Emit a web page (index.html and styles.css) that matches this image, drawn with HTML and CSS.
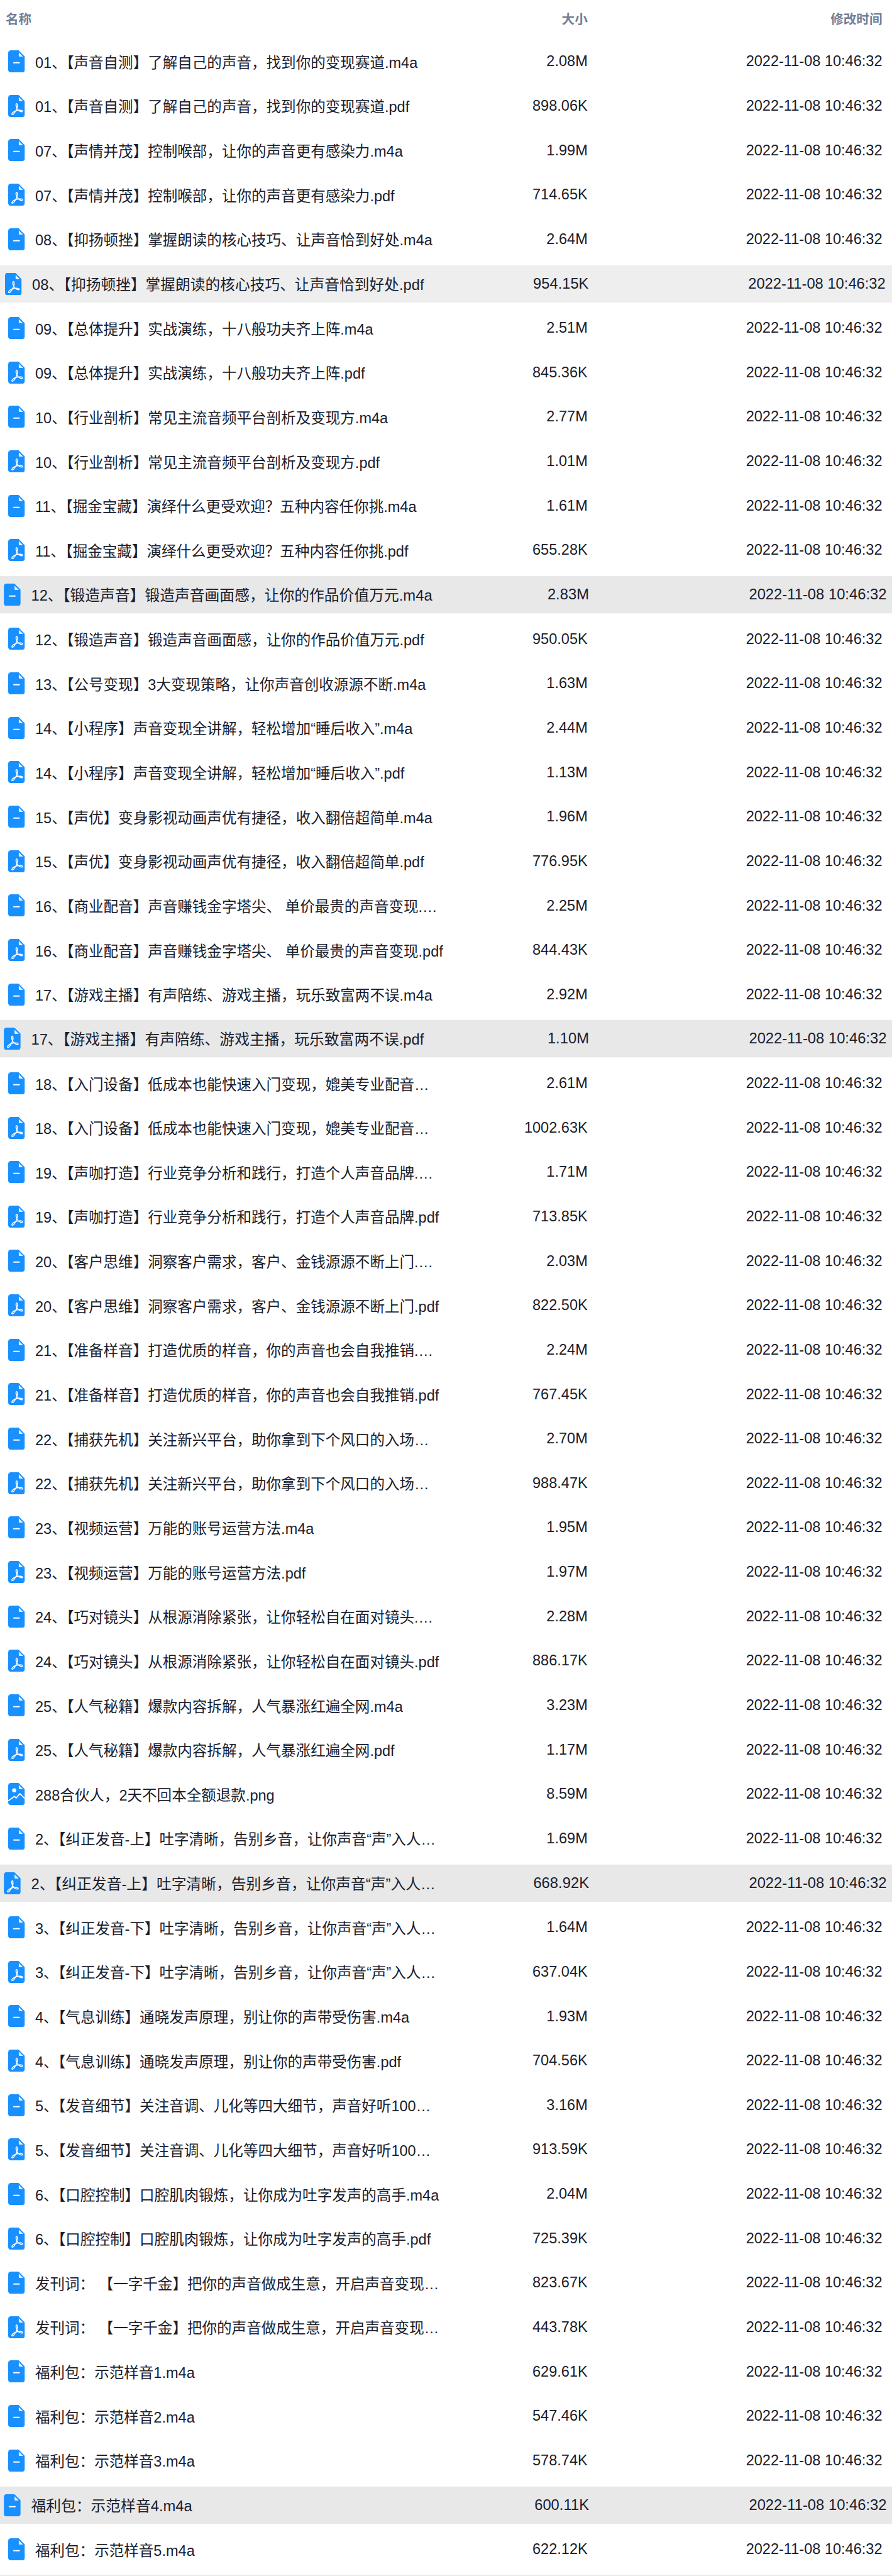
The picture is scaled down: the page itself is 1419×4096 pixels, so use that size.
FILE: index.html
```html
<!DOCTYPE html>
<html lang="zh-CN">
<head>
  <meta charset="UTF-8">
  <meta name="viewport" content="width=device-width, initial-scale=1.0">
  <title>文件列表</title>
  <link rel="stylesheet" href="styles.css">
</head>
<body>
<!-- Icon definitions -->
<svg class="defs" width="0" height="0">
  <symbol id="icon-audio" viewBox="0 0 36 48">
    <path class="sheet" d="M6 0H22.5L36 13.5V42a6 6 0 0 1-6 6H6a6 6 0 0 1-6-6V6a6 6 0 0 1 6-6z"/>
    <path class="fold" d="M23 4.5L32.2 13.6H24.5a1.5 1.5 0 0 1-1.5-1.5z"/>
    <rect class="mark" x="10.8" y="25.4" width="14.6" height="2.9" rx="1.4"/>
  </symbol>
  <symbol id="icon-pdf" viewBox="0 0 36 48">
    <path class="sheet" d="M6 0H22.5L36 13.5V42a6 6 0 0 1-6 6H6a6 6 0 0 1-6-6V6a6 6 0 0 1 6-6z"/>
    <path class="fold" d="M23 4.5L32.2 13.6H24.5a1.5 1.5 0 0 1-1.5-1.5z"/>
    <path class="swirl" d="M18.2 18.5C16.4 18.5 16.6 22.5 17.8 26C19.2 30 22 33.5 25 35C28 36.5 31 37 31 35C31 33 26 32.5 22 33C17 33.6 12 36 9.5 38.5C7.5 40.5 7.5 42.5 9.2 42.5C11.5 42.5 15 37 17 33C19 29 20.2 25 19.8 22C19.6 19.8 19 18.5 18.2 18.5Z"/>
  </symbol>
  <symbol id="icon-image" viewBox="0 0 36 48">
    <path class="sheet" d="M6 0H22.5L36 13.5V42a6 6 0 0 1-6 6H6a6 6 0 0 1-6-6V6a6 6 0 0 1 6-6z"/>
    <path class="fold" d="M23 4.5L32.2 13.6H24.5a1.5 1.5 0 0 1-1.5-1.5z"/>
    <circle class="dot" cx="13" cy="16" r="4.4"/>
    <path class="ridge" d="M0 38.8L13.6 28.8L17.2 32.8L25.3 23L36 33.8"/>
  </symbol>
</svg>

<div class="table">
  <!-- Cabeçalho -->
  <div class="head">
    <div class="head-name">名称</div>
    <div class="cell-size">大小</div>
    <div class="cell-date">修改时间</div>
  </div>

  <div class="list">
    <div class="row"><div class="cell-name"><svg class="icon"><use href="#icon-audio"/></svg><span class="name">01、【声音自测】了解自己的声音，找到你的变现赛道.m4a</span></div><div class="cell-size">2.08M</div><div class="cell-date">2022-11-08 10:46:32</div></div>
    <div class="row"><div class="cell-name"><svg class="icon"><use href="#icon-pdf"/></svg><span class="name">01、【声音自测】了解自己的声音，找到你的变现赛道.pdf</span></div><div class="cell-size">898.06K</div><div class="cell-date">2022-11-08 10:46:32</div></div>
    <div class="row"><div class="cell-name"><svg class="icon"><use href="#icon-audio"/></svg><span class="name">07、【声情并茂】控制喉部，让你的声音更有感染力.m4a</span></div><div class="cell-size">1.99M</div><div class="cell-date">2022-11-08 10:46:32</div></div>
    <div class="row"><div class="cell-name"><svg class="icon"><use href="#icon-pdf"/></svg><span class="name">07、【声情并茂】控制喉部，让你的声音更有感染力.pdf</span></div><div class="cell-size">714.65K</div><div class="cell-date">2022-11-08 10:46:32</div></div>
    <div class="row"><div class="cell-name"><svg class="icon"><use href="#icon-audio"/></svg><span class="name">08、【抑扬顿挫】掌握朗读的核心技巧、让声音恰到好处.m4a</span></div><div class="cell-size">2.64M</div><div class="cell-date">2022-11-08 10:46:32</div></div>
    <div class="row fading"><div class="cell-name"><svg class="icon"><use href="#icon-pdf"/></svg><span class="name">08、【抑扬顿挫】掌握朗读的核心技巧、让声音恰到好处.pdf</span></div><div class="cell-size">954.15K</div><div class="cell-date">2022-11-08 10:46:32</div></div>
    <div class="row"><div class="cell-name"><svg class="icon"><use href="#icon-audio"/></svg><span class="name">09、【总体提升】实战演练，十八般功夫齐上阵.m4a</span></div><div class="cell-size">2.51M</div><div class="cell-date">2022-11-08 10:46:32</div></div>
    <div class="row"><div class="cell-name"><svg class="icon"><use href="#icon-pdf"/></svg><span class="name">09、【总体提升】实战演练，十八般功夫齐上阵.pdf</span></div><div class="cell-size">845.36K</div><div class="cell-date">2022-11-08 10:46:32</div></div>
    <div class="row"><div class="cell-name"><svg class="icon"><use href="#icon-audio"/></svg><span class="name">10、【行业剖析】常见主流音频平台剖析及变现方.m4a</span></div><div class="cell-size">2.77M</div><div class="cell-date">2022-11-08 10:46:32</div></div>
    <div class="row"><div class="cell-name"><svg class="icon"><use href="#icon-pdf"/></svg><span class="name">10、【行业剖析】常见主流音频平台剖析及变现方.pdf</span></div><div class="cell-size">1.01M</div><div class="cell-date">2022-11-08 10:46:32</div></div>
    <div class="row"><div class="cell-name"><svg class="icon"><use href="#icon-audio"/></svg><span class="name">11、【掘金宝藏】演绎什么更受欢迎？五种内容任你挑.m4a</span></div><div class="cell-size">1.61M</div><div class="cell-date">2022-11-08 10:46:32</div></div>
    <div class="row"><div class="cell-name"><svg class="icon"><use href="#icon-pdf"/></svg><span class="name">11、【掘金宝藏】演绎什么更受欢迎？五种内容任你挑.pdf</span></div><div class="cell-size">655.28K</div><div class="cell-date">2022-11-08 10:46:32</div></div>
    <div class="row active"><div class="cell-name"><svg class="icon"><use href="#icon-audio"/></svg><span class="name">12、【锻造声音】锻造声音画面感，让你的作品价值万元.m4a</span></div><div class="cell-size">2.83M</div><div class="cell-date">2022-11-08 10:46:32</div></div>
    <div class="row"><div class="cell-name"><svg class="icon"><use href="#icon-pdf"/></svg><span class="name">12、【锻造声音】锻造声音画面感，让你的作品价值万元.pdf</span></div><div class="cell-size">950.05K</div><div class="cell-date">2022-11-08 10:46:32</div></div>
    <div class="row"><div class="cell-name"><svg class="icon"><use href="#icon-audio"/></svg><span class="name">13、【公号变现】3大变现策略，让你声音创收源源不断.m4a</span></div><div class="cell-size">1.63M</div><div class="cell-date">2022-11-08 10:46:32</div></div>
    <div class="row"><div class="cell-name"><svg class="icon"><use href="#icon-audio"/></svg><span class="name">14、【小程序】声音变现全讲解，轻松增加“睡后收入”.m4a</span></div><div class="cell-size">2.44M</div><div class="cell-date">2022-11-08 10:46:32</div></div>
    <div class="row"><div class="cell-name"><svg class="icon"><use href="#icon-pdf"/></svg><span class="name">14、【小程序】声音变现全讲解，轻松增加“睡后收入”.pdf</span></div><div class="cell-size">1.13M</div><div class="cell-date">2022-11-08 10:46:32</div></div>
    <div class="row"><div class="cell-name"><svg class="icon"><use href="#icon-audio"/></svg><span class="name">15、【声优】变身影视动画声优有捷径，收入翻倍超简单.m4a</span></div><div class="cell-size">1.96M</div><div class="cell-date">2022-11-08 10:46:32</div></div>
    <div class="row"><div class="cell-name"><svg class="icon"><use href="#icon-pdf"/></svg><span class="name">15、【声优】变身影视动画声优有捷径，收入翻倍超简单.pdf</span></div><div class="cell-size">776.95K</div><div class="cell-date">2022-11-08 10:46:32</div></div>
    <div class="row"><div class="cell-name"><svg class="icon"><use href="#icon-audio"/></svg><span class="name">16、【商业配音】声音赚钱金字塔尖、 单价最贵的声音变现.…</span></div><div class="cell-size">2.25M</div><div class="cell-date">2022-11-08 10:46:32</div></div>
    <div class="row"><div class="cell-name"><svg class="icon"><use href="#icon-pdf"/></svg><span class="name">16、【商业配音】声音赚钱金字塔尖、 单价最贵的声音变现.pdf</span></div><div class="cell-size">844.43K</div><div class="cell-date">2022-11-08 10:46:32</div></div>
    <div class="row"><div class="cell-name"><svg class="icon"><use href="#icon-audio"/></svg><span class="name">17、【游戏主播】有声陪练、游戏主播，玩乐致富两不误.m4a</span></div><div class="cell-size">2.92M</div><div class="cell-date">2022-11-08 10:46:32</div></div>
    <div class="row active"><div class="cell-name"><svg class="icon"><use href="#icon-pdf"/></svg><span class="name">17、【游戏主播】有声陪练、游戏主播，玩乐致富两不误.pdf</span></div><div class="cell-size">1.10M</div><div class="cell-date">2022-11-08 10:46:32</div></div>
    <div class="row"><div class="cell-name"><svg class="icon"><use href="#icon-audio"/></svg><span class="name">18、【入门设备】低成本也能快速入门变现，媲美专业配音…</span></div><div class="cell-size">2.61M</div><div class="cell-date">2022-11-08 10:46:32</div></div>
    <div class="row"><div class="cell-name"><svg class="icon"><use href="#icon-pdf"/></svg><span class="name">18、【入门设备】低成本也能快速入门变现，媲美专业配音…</span></div><div class="cell-size">1002.63K</div><div class="cell-date">2022-11-08 10:46:32</div></div>
    <div class="row"><div class="cell-name"><svg class="icon"><use href="#icon-audio"/></svg><span class="name">19、【声咖打造】行业竞争分析和践行，打造个人声音品牌.…</span></div><div class="cell-size">1.71M</div><div class="cell-date">2022-11-08 10:46:32</div></div>
    <div class="row"><div class="cell-name"><svg class="icon"><use href="#icon-pdf"/></svg><span class="name">19、【声咖打造】行业竞争分析和践行，打造个人声音品牌.pdf</span></div><div class="cell-size">713.85K</div><div class="cell-date">2022-11-08 10:46:32</div></div>
    <div class="row"><div class="cell-name"><svg class="icon"><use href="#icon-audio"/></svg><span class="name">20、【客户思维】洞察客户需求，客户、金钱源源不断上门.…</span></div><div class="cell-size">2.03M</div><div class="cell-date">2022-11-08 10:46:32</div></div>
    <div class="row"><div class="cell-name"><svg class="icon"><use href="#icon-pdf"/></svg><span class="name">20、【客户思维】洞察客户需求，客户、金钱源源不断上门.pdf</span></div><div class="cell-size">822.50K</div><div class="cell-date">2022-11-08 10:46:32</div></div>
    <div class="row"><div class="cell-name"><svg class="icon"><use href="#icon-audio"/></svg><span class="name">21、【准备样音】打造优质的样音，你的声音也会自我推销.…</span></div><div class="cell-size">2.24M</div><div class="cell-date">2022-11-08 10:46:32</div></div>
    <div class="row"><div class="cell-name"><svg class="icon"><use href="#icon-pdf"/></svg><span class="name">21、【准备样音】打造优质的样音，你的声音也会自我推销.pdf</span></div><div class="cell-size">767.45K</div><div class="cell-date">2022-11-08 10:46:32</div></div>
    <div class="row"><div class="cell-name"><svg class="icon"><use href="#icon-audio"/></svg><span class="name">22、【捕获先机】关注新兴平台，助你拿到下个风口的入场…</span></div><div class="cell-size">2.70M</div><div class="cell-date">2022-11-08 10:46:32</div></div>
    <div class="row"><div class="cell-name"><svg class="icon"><use href="#icon-pdf"/></svg><span class="name">22、【捕获先机】关注新兴平台，助你拿到下个风口的入场…</span></div><div class="cell-size">988.47K</div><div class="cell-date">2022-11-08 10:46:32</div></div>
    <div class="row"><div class="cell-name"><svg class="icon"><use href="#icon-audio"/></svg><span class="name">23、【视频运营】万能的账号运营方法.m4a</span></div><div class="cell-size">1.95M</div><div class="cell-date">2022-11-08 10:46:32</div></div>
    <div class="row"><div class="cell-name"><svg class="icon"><use href="#icon-pdf"/></svg><span class="name">23、【视频运营】万能的账号运营方法.pdf</span></div><div class="cell-size">1.97M</div><div class="cell-date">2022-11-08 10:46:32</div></div>
    <div class="row"><div class="cell-name"><svg class="icon"><use href="#icon-audio"/></svg><span class="name">24、【巧对镜头】从根源消除紧张，让你轻松自在面对镜头.…</span></div><div class="cell-size">2.28M</div><div class="cell-date">2022-11-08 10:46:32</div></div>
    <div class="row"><div class="cell-name"><svg class="icon"><use href="#icon-pdf"/></svg><span class="name">24、【巧对镜头】从根源消除紧张，让你轻松自在面对镜头.pdf</span></div><div class="cell-size">886.17K</div><div class="cell-date">2022-11-08 10:46:32</div></div>
    <div class="row"><div class="cell-name"><svg class="icon"><use href="#icon-audio"/></svg><span class="name">25、【人气秘籍】爆款内容拆解，人气暴涨红遍全网.m4a</span></div><div class="cell-size">3.23M</div><div class="cell-date">2022-11-08 10:46:32</div></div>
    <div class="row"><div class="cell-name"><svg class="icon"><use href="#icon-pdf"/></svg><span class="name">25、【人气秘籍】爆款内容拆解，人气暴涨红遍全网.pdf</span></div><div class="cell-size">1.17M</div><div class="cell-date">2022-11-08 10:46:32</div></div>
    <div class="row"><div class="cell-name"><svg class="icon"><use href="#icon-image"/></svg><span class="name">288合伙人，2天不回本全额退款.png</span></div><div class="cell-size">8.59M</div><div class="cell-date">2022-11-08 10:46:32</div></div>
    <div class="row"><div class="cell-name"><svg class="icon"><use href="#icon-audio"/></svg><span class="name">2、【纠正发音-上】吐字清晰，告别乡音，让你声音“声”入人…</span></div><div class="cell-size">1.69M</div><div class="cell-date">2022-11-08 10:46:32</div></div>
    <div class="row active"><div class="cell-name"><svg class="icon"><use href="#icon-pdf"/></svg><span class="name">2、【纠正发音-上】吐字清晰，告别乡音，让你声音“声”入人…</span></div><div class="cell-size">668.92K</div><div class="cell-date">2022-11-08 10:46:32</div></div>
    <div class="row"><div class="cell-name"><svg class="icon"><use href="#icon-audio"/></svg><span class="name">3、【纠正发音-下】吐字清晰，告别乡音，让你声音“声”入人…</span></div><div class="cell-size">1.64M</div><div class="cell-date">2022-11-08 10:46:32</div></div>
    <div class="row"><div class="cell-name"><svg class="icon"><use href="#icon-pdf"/></svg><span class="name">3、【纠正发音-下】吐字清晰，告别乡音，让你声音“声”入人…</span></div><div class="cell-size">637.04K</div><div class="cell-date">2022-11-08 10:46:32</div></div>
    <div class="row"><div class="cell-name"><svg class="icon"><use href="#icon-audio"/></svg><span class="name">4、【气息训练】通晓发声原理，别让你的声带受伤害.m4a</span></div><div class="cell-size">1.93M</div><div class="cell-date">2022-11-08 10:46:32</div></div>
    <div class="row"><div class="cell-name"><svg class="icon"><use href="#icon-pdf"/></svg><span class="name">4、【气息训练】通晓发声原理，别让你的声带受伤害.pdf</span></div><div class="cell-size">704.56K</div><div class="cell-date">2022-11-08 10:46:32</div></div>
    <div class="row"><div class="cell-name"><svg class="icon"><use href="#icon-audio"/></svg><span class="name">5、【发音细节】关注音调、儿化等四大细节，声音好听100…</span></div><div class="cell-size">3.16M</div><div class="cell-date">2022-11-08 10:46:32</div></div>
    <div class="row"><div class="cell-name"><svg class="icon"><use href="#icon-pdf"/></svg><span class="name">5、【发音细节】关注音调、儿化等四大细节，声音好听100…</span></div><div class="cell-size">913.59K</div><div class="cell-date">2022-11-08 10:46:32</div></div>
    <div class="row"><div class="cell-name"><svg class="icon"><use href="#icon-audio"/></svg><span class="name">6、【口腔控制】口腔肌肉锻炼，让你成为吐字发声的高手.m4a</span></div><div class="cell-size">2.04M</div><div class="cell-date">2022-11-08 10:46:32</div></div>
    <div class="row"><div class="cell-name"><svg class="icon"><use href="#icon-pdf"/></svg><span class="name">6、【口腔控制】口腔肌肉锻炼，让你成为吐字发声的高手.pdf</span></div><div class="cell-size">725.39K</div><div class="cell-date">2022-11-08 10:46:32</div></div>
    <div class="row"><div class="cell-name"><svg class="icon"><use href="#icon-audio"/></svg><span class="name">发刊词： 【一字千金】把你的声音做成生意，开启声音变现…</span></div><div class="cell-size">823.67K</div><div class="cell-date">2022-11-08 10:46:32</div></div>
    <div class="row"><div class="cell-name"><svg class="icon"><use href="#icon-pdf"/></svg><span class="name">发刊词： 【一字千金】把你的声音做成生意，开启声音变现…</span></div><div class="cell-size">443.78K</div><div class="cell-date">2022-11-08 10:46:32</div></div>
    <div class="row"><div class="cell-name"><svg class="icon"><use href="#icon-audio"/></svg><span class="name">福利包：示范样音1.m4a</span></div><div class="cell-size">629.61K</div><div class="cell-date">2022-11-08 10:46:32</div></div>
    <div class="row"><div class="cell-name"><svg class="icon"><use href="#icon-audio"/></svg><span class="name">福利包：示范样音2.m4a</span></div><div class="cell-size">547.46K</div><div class="cell-date">2022-11-08 10:46:32</div></div>
    <div class="row"><div class="cell-name"><svg class="icon"><use href="#icon-audio"/></svg><span class="name">福利包：示范样音3.m4a</span></div><div class="cell-size">578.74K</div><div class="cell-date">2022-11-08 10:46:32</div></div>
    <div class="row active"><div class="cell-name"><svg class="icon"><use href="#icon-audio"/></svg><span class="name">福利包：示范样音4.m4a</span></div><div class="cell-size">600.11K</div><div class="cell-date">2022-11-08 10:46:32</div></div>
    <div class="row"><div class="cell-name"><svg class="icon"><use href="#icon-audio"/></svg><span class="name">福利包：示范样音5.m4a</span></div><div class="cell-size">622.12K</div><div class="cell-date">2022-11-08 10:46:32</div></div>
  </div>
</div>
</body>
</html>
```

FILE: styles.css
```css
/* Página */
body {
  margin: 0;
  background: #fff;
  color: #1a202c;
  font-family: "Liberation Sans", "Noto Sans CJK SC", sans-serif;
  font-size: 23.55px;
}

.defs {
  display: block;
  height: 0;
}

/* Ícones de arquivo */
.sheet { fill: #1890ff; }
.fold { fill: #e8f4ff; }
.mark, .dot { fill: #fff; }
.swirl { fill: none; stroke: #fff; stroke-width: 2; stroke-linejoin: round; }
.ridge { fill: none; stroke: #fff; stroke-width: 2.4; stroke-linejoin: round; }

/* Cabeçalho */
.head, .row {
  display: grid;
  grid-template-columns: 1fr 190px 468.8px;
  align-items: center;
}

.head {
  height: 57.4px;
  padding: 0 15.46px 0 9px;
  color: #718096;
  font-size: 20.6px;
  font-weight: 600;
}

.cell-size, .cell-date {
  text-align: right;
  white-space: nowrap;
}

/* Lista de arquivos */
.list {
  display: flex;
  flex-direction: column;
  gap: 11.776px;
  margin-top: 11px;
  padding-bottom: 11.776px;
  border-bottom: 1.47px solid #e2e2e2;
}

.row {
  height: 58.88px;
  padding: 0 15.46px 0 13.25px;
  border-radius: 5.9px;
}

.row.active {
  background: #e8e8e9;
  transform: scale(1.01);
}

.row.fading {
  background: #eeeeee;
  transform: scale(1.0075);
}

.cell-name {
  display: flex;
  align-items: center;
  gap: 16.2px;
  min-width: 0;
}

.icon {
  flex: none;
  width: 26.5px;
  height: 35.33px;
}

.name {
  white-space: nowrap;
}
```
